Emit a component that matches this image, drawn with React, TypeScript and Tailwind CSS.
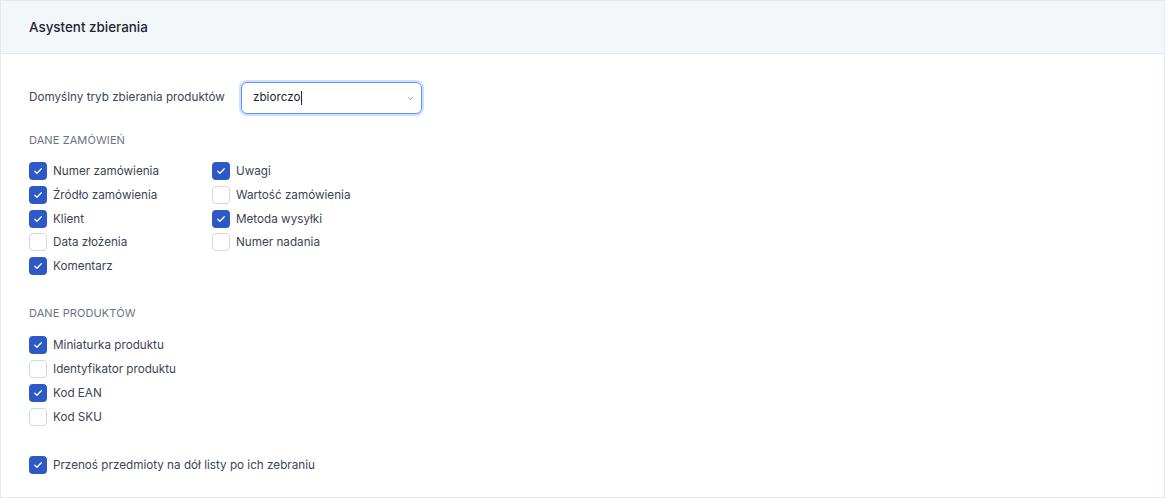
import { useState } from "react";

type Item = { label: string; checked: boolean };

const orderLeft: Item[] = [
  { label: "Numer zamówienia", checked: true },
  { label: "Źródło zamówienia", checked: true },
  { label: "Klient", checked: true },
  { label: "Data złożenia", checked: false },
  { label: "Komentarz", checked: true },
];

const orderRight: Item[] = [
  { label: "Uwagi", checked: true },
  { label: "Wartość zamówienia", checked: false },
  { label: "Metoda wysyłki", checked: true },
  { label: "Numer nadania", checked: false },
];

const products: Item[] = [
  { label: "Miniaturka produktu", checked: true },
  { label: "Identyfikator produktu", checked: false },
  { label: "Kod EAN", checked: true },
  { label: "Kod SKU", checked: false },
];

function Check({ label, checked: initial }: Item) {
  const [checked, setChecked] = useState(initial);
  return (
    <label className="flex h-[18px] cursor-pointer items-center gap-[6px]">
      <button
        type="button"
        onClick={() => setChecked(!checked)}
        className={
          checked
            ? "flex h-[18px] w-[18px] shrink-0 items-center justify-center rounded-[4px] bg-[#2c59c6]"
            : "flex h-[18px] w-[18px] shrink-0 items-center justify-center rounded-[4px] border border-[#d3d7de] bg-white"
        }
      >
        {checked && (
          <svg width="10" height="10" viewBox="0 0 10 10" fill="none">
            <path
              d="M1.8 5.2 4 7.3 8.3 2.8"
              stroke="white"
              strokeWidth="1.3"
              strokeLinecap="round"
              strokeLinejoin="round"
            />
          </svg>
        )}
      </button>
      <span className="whitespace-nowrap text-[11.7px] leading-[18px] text-[#3b4554]">{label}</span>
    </label>
  );
}

function Column({ items }: { items: Item[] }) {
  return (
    <div className="flex flex-col gap-[5.8px]">
      {items.map((it) => (
        <Check key={it.label} {...it} />
      ))}
    </div>
  );
}

export default function App() {
  return (
    <div className="h-[498px] w-[1165px] bg-white font-['Inter',sans-serif]">
      <div className="flex h-full flex-col border border-[#e5e8ef]">
        <div className="flex h-[53px] shrink-0 items-center border-b border-[#e5e8ef] bg-[#f4f7fa] px-[28px]">
          <h2 className="text-[13.4px] font-medium text-[#1f2633]">Asystent zbierania</h2>
        </div>

        <div className="flex flex-col px-[28px] pt-[28px]">
          <div className="flex items-center">
            <span className="w-[212px] whitespace-nowrap text-[11.7px] text-[#3b4554]">
              Domyślny tryb zbierania produktów
            </span>
            <div className="relative h-[32px] w-[181px] rounded-[6px] border border-[#5b95f2] shadow-[0_0_0_2px_#cfe0fc]">
              <div className="flex h-full items-center pl-[11px] text-[11.7px] text-[#1f2633]">
                zbiorczo
                <span className="ml-[1px] h-[14px] w-px bg-[#1f2633]" />
              </div>
              <svg
                className="absolute right-[7px] top-[13px]"
                width="7"
                height="5"
                viewBox="0 0 7 5"
                fill="none"
              >
                <path d="M1.5 1.5 3.5 3.3 5.5 1.5" stroke="#9aa1ad" strokeWidth="1" strokeLinecap="round" />
              </svg>
            </div>
          </div>

          <h3 className="mt-[18px] text-[11px] uppercase leading-[16px] tracking-[0.1px] text-[#6b7482]">
            Dane zamówień
          </h3>
          <div className="mt-[14px] grid grid-cols-[183px_auto] justify-start">
            <Column items={orderLeft} />
            <Column items={orderRight} />
          </div>

          <h3 className="mt-[30px] text-[11px] uppercase leading-[16px] tracking-[0.1px] text-[#6b7482]">
            Dane produktów
          </h3>
          <div className="mt-[15px]">
            <Column items={products} />
          </div>

          <div className="mt-[30px]">
            <Check label="Przenoś przedmioty na dół listy po ich zebraniu" checked />
          </div>
        </div>
      </div>
    </div>
  );
}
